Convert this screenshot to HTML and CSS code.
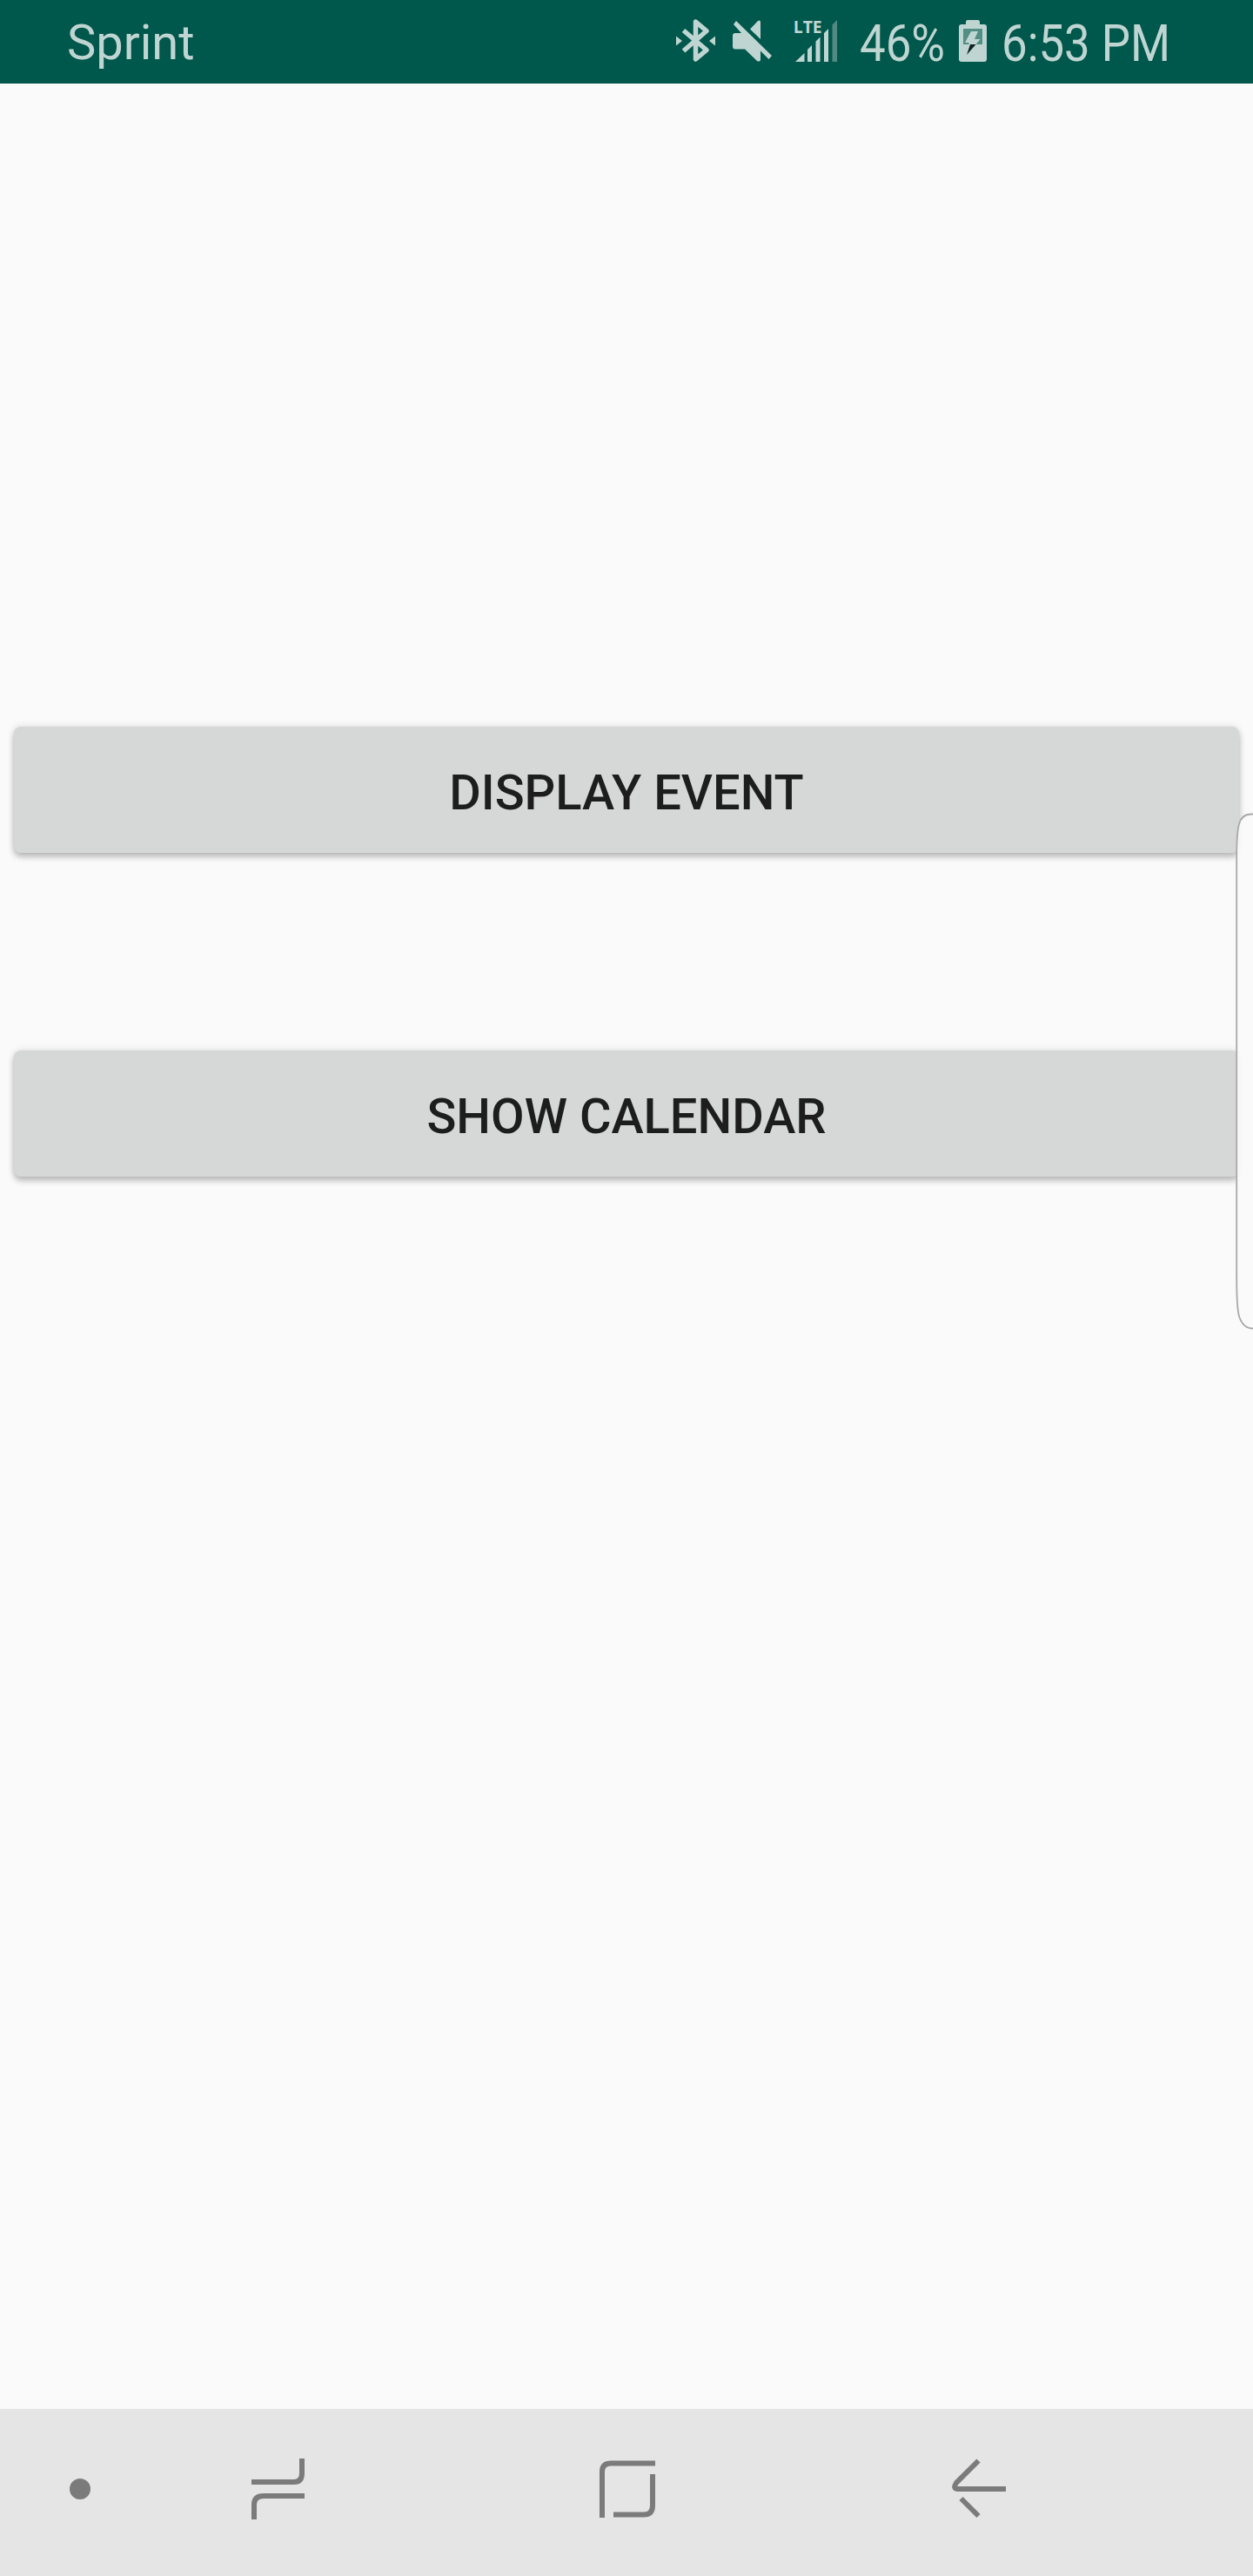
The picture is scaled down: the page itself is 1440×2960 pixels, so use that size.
FILE: index.html
```html
<!DOCTYPE html>
<html lang="en">
<head>
<meta charset="utf-8">
<title>Events</title>
<link rel="stylesheet" href="styles.css">
</head>
<body>
<div class="screen">
  <header class="status-bar">
    <span class="carrier">Sprint</span>
    <div class="indicators">
      <svg class="bluetooth" width="46" height="52" viewBox="0 0 46 52" fill="none" stroke="currentColor" stroke-width="5.5">
        <path d="M8.500 14 35 36.500 22.500 47V4L35 14.500 8.500 37.500" stroke-linejoin="round"/>
        <path d="M0 20.500V31.500L7 26ZM45 20.500V31.500L38 26Z" fill="currentColor" stroke="none"/>
      </svg>
      <svg class="muted" width="46" height="50" viewBox="0 0 46 50" fill="currentColor">
        <path d="M4 1 45 41 41.500 45 32 35.500V46Q31 48.500 28 47L14 33.500H3Q0 33.500 0 30.500V18Q0 15 3 15H10L1 5ZM20 10.500 28.500 1.500Q32-1 32 3V22Z"/>
      </svg>
      <svg class="signal" width="50" height="50" viewBox="0 0 50 50" fill="currentColor">
        <text class="lte" x="-1.300" y="15" textLength="33" lengthAdjust="spacingAndGlyphs">LTE</text>
        <path d="M1 48 11.500 38V48ZM15 34 20 29V48H15ZM24.500 24.500 29.500 19.500V48H24.500ZM34 15 39 10V48H34Z"/>
        <path d="M43.500 5.500 49 0V48H43.500Z" opacity=".42"/>
      </svg>
      <svg class="reading percent" width="98" height="60" viewBox="0 0 98 60" fill="currentColor">
        <text x="0" y="53" textLength="98" lengthAdjust="spacingAndGlyphs">46%</text>
      </svg>
      <svg class="battery" width="32" height="48" viewBox="0 0 32 48">
        <path d="M8 5V2Q8 0 10 0H22Q24 0 24 2V5H29Q32 5 32 8V45Q32 48 29 48H3Q0 48 0 45V8Q0 5 3 5Z" fill="currentColor"/>
        <path d="M5 10H27V28H5Z" fill="#528e85"/>
        <path d="M14 13H22L18 22H24.500L19.500 28H11.500V26H7Z" fill="currentColor"/>
        <path d="M13 28H19.500L9 40Z" fill="#10211e"/>
      </svg>
      <svg class="reading clock" width="194" height="60" viewBox="0 0 194 60" fill="currentColor">
        <text x="0" y="53" textLength="194" lengthAdjust="spacingAndGlyphs">6:53 PM</text>
      </svg>
    </div>
  </header>

  <main class="content">
    <button class="action">DISPLAY EVENT</button>
    <button class="action">SHOW CALENDAR</button>
  </main>

  <nav class="nav-bar">
    <span class="dot"></span>
    <svg class="recents" width="62" height="72" viewBox="0 0 62 72">
      <path d="M0 28H49Q58 28 58 18V1M61 44H14Q3 44 3 54V71"/>
    </svg>
    <svg class="home" width="66" height="68" viewBox="0 0 66 68">
      <path d="M3 66V13Q3 3.500 13 3.500H64M61 16V52Q61 62.500 51 62.500H16"/>
    </svg>
    <svg class="back" width="64" height="70" viewBox="0 0 64 70">
      <path d="M30.500 2.500 5 28Q.500 35 7 35H62M10.500 46 30.500 66"/>
    </svg>
  </nav>

  <svg class="edge-handle" width="20" height="594" viewBox="0 0 20 594">
    <path d="M20 1.500H18Q7 1.500 4 13Q1.200 23 1.200 50V534Q1.200 571 4.500 580Q9 592.500 20 592.500"/>
  </svg>
</div>
</body>
</html>
```
FILE: styles.css
```css
* {
  box-sizing: border-box;
}

body {
  margin: 0;
  font-family: Roboto, "Noto Sans", sans-serif;
}

.screen {
  position: relative;
  display: flex;
  flex-direction: column;
  width: 1440px;
  height: 2960px;
  overflow: hidden;
  background: #fafafa;
}

.status-bar {
  display: flex;
  justify-content: space-between;
  height: 96px;
  padding: 0 95px 0 77px;
  background: #00574b;
  color: #bfd5d2;
}

.carrier {
  font-size: 56px;
  line-height: 98px;
}

.indicators {
  display: flex;
  align-items: flex-start;
}

.indicators svg {
  overflow: visible;
}

.bluetooth {
  margin: 21px 19px 0 0;
}

.muted {
  margin: 23px 25px 0 0;
}

.signal {
  margin: 23px 25px 0 0;
}

.lte {
  font: 700 20px "Open Sans", sans-serif;
}

.reading {
  margin-top: 17px;
  font-size: 60px;
}

.battery {
  margin: 23px 17px 0 16px;
}

.content {
  display: flex;
  flex: 1;
  flex-direction: column;
  gap: 227px;
  padding: 739px 16px 0;
}

.action {
  height: 145px;
  padding: 6px 0 0;
  border: 0;
  border-radius: 8px;
  background: #d6d8d7;
  box-shadow: 0 5px 7px rgba(0, 0, 0, .22), 0 0 8px rgba(0, 0, 0, .12);
  color: #1d1d1d;
  font: 500 56px/1 Roboto, "Noto Sans", sans-serif;
}

.nav-bar {
  display: flex;
  align-items: flex-start;
  height: 192px;
  padding-left: 80px;
  background: #e5e5e5;
}

.nav-bar path {
  fill: none;
  stroke: #7b7b7b;
  stroke-width: 6px;
}

.dot {
  width: 24px;
  height: 24px;
  margin: 80px 185px 0 0;
  border-radius: 50%;
  background: #7b7b7b;
}

.recents {
  margin: 56px 338px 0 0;
}

.home {
  margin: 59px 339px 0 0;
}

.back {
  margin-top: 57px;
}

.edge-handle {
  position: absolute;
  top: 934px;
  right: 0;
}

.edge-handle path {
  fill: rgba(250, 250, 250, .92);
  stroke: #a9a9a9;
  stroke-width: 1.8px;
}
```
